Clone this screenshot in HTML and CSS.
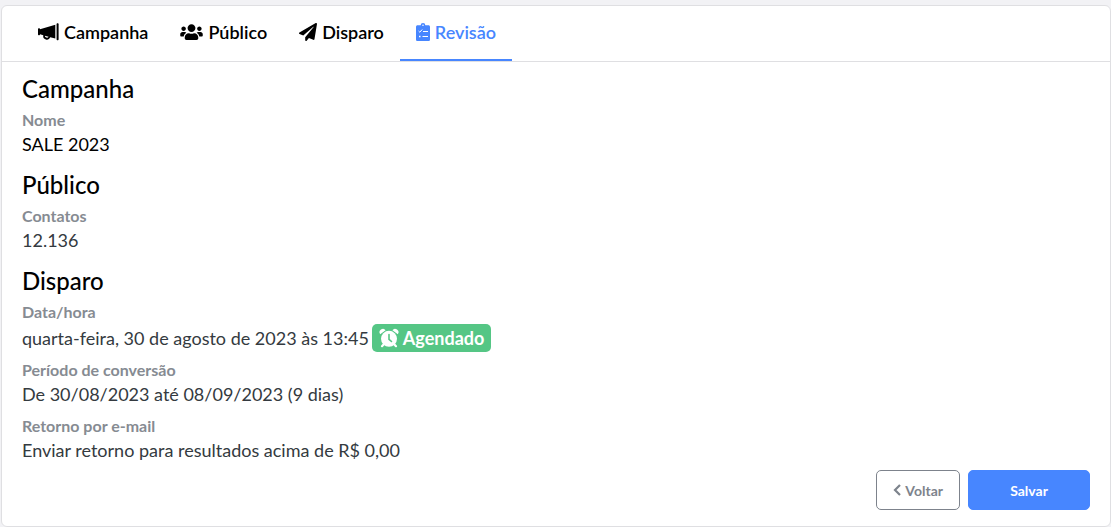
FILE: index.html
```html
<!DOCTYPE html>
<html lang="pt-br">
<head>
    <meta charset="UTF-8">
    <meta name="viewport" content="width=device-width, initial-scale=1.0">
    <title>Campanha - Revisão</title>
    <link rel="stylesheet" href="styles.css">
</head>
<body>

<main class="card">
    <nav class="abas">
        <a class="aba" href="#campanha">
            <svg class="icone" width="21" height="18" viewBox="0 0 21 18" fill="currentColor" aria-hidden="true">
                <path d="M0 6.2c0-.6.4-1 1-1s1 .4 1 1L17.300 1.800v13.800L12.200 14.200a3.600 3.600 0 0 1-6.900-2L2 11.300c0 .6-.4 1-1 1s-1-.4-1-1zM6.900 12.700a2 2 0 0 0 3.700 1z"/>
                <path d="M18.600 1.200c0-.7.400-1 1-1s1 .300 1 1v15c0 .6-.4 1-1 1s-1-.4-1-1z"/>
            </svg>
            Campanha
        </a>
        <a class="aba" href="#publico">
            <svg class="icone" width="23" height="18" viewBox="0 0 640 512" fill="currentColor" aria-hidden="true">
                <path d="M96 224c35.3 0 64-28.7 64-64s-28.7-64-64-64-64 28.7-64 64 28.7 64 64 64zm448 0c35.3 0 64-28.7 64-64s-28.7-64-64-64-64 28.7-64 64 28.7 64 64 64zm32 32h-64c-17.6 0-33.5 7.1-45.1 18.6 40.3 22.1 68.9 62 75.1 109.4h66c17.7 0 32-14.3 32-32v-32c0-35.3-28.7-64-64-64zm-256 0c61.9 0 112-50.1 112-112S381.9 32 320 32 208 82.1 208 144s50.1 112 112 112zm76.800 32h-8.300c-20.800 10-43.900 16-68.500 16s-47.600-6-68.500-16h-8.300C179.600 288 128 339.600 128 403.200V432c0 26.500 21.500 48 48 48h288c26.500 0 48-21.500 48-48v-28.800c0-63.600-51.600-115.200-115.200-115.200zm-223.700-13.400C161.500 263.100 145.600 256 128 256H64c-35.300 0-64 28.700-64 64v32c0 17.700 14.300 32 32 32h65.900c6.300-47.400 34.900-87.300 75.200-109.400z"/>
            </svg>
            Público
        </a>
        <a class="aba" href="#disparo">
            <svg class="icone" width="18" height="18" viewBox="0 0 512 512" fill="currentColor" aria-hidden="true">
                <path d="M476 3.2L12.5 270.6c-18.1 10.4-15.8 35.6 2.2 43.2L121 358.4l287.3-253.2c5.5-4.9 13.3 2.6 8.6 8.3L176 407v80.5c0 23.6 28.5 32.9 42.5 15.800L282 426l124.600 52.200c14.200 6 30.400-2.900 33-18.200l72-432C515 7.800 493.300-6.800 476 3.200z"/>
            </svg>
            Disparo
        </a>
        <a class="aba ativa" href="#revisao" aria-current="step">
            <svg class="icone" width="14" height="18" viewBox="0 0 14 18" aria-hidden="true">
                <path fill="currentColor" fill-rule="evenodd" d="M1.600 2.300H4.700a2.300 2.300 0 0 1 4.600 0h3.100c.9 0 1.600.7 1.600 1.600v12.500c0 .9-.7 1.600-1.600 1.600H1.600C.7 18 0 17.300 0 16.400V3.900C0 3 .7 2.300 1.600 2.300zM7 1.500a.8.8 0 1 0 0 1.600.8.8 0 0 0 0-1.600z"/>
                <path fill="none" stroke="#fff" d="M2.600 8l1.200 1.200 2.400-2.700M7 8.500h5M6.500 13.500H12"/>
                <path fill="#fff" d="M3 12.800h1.500v1.400H3z"/>
            </svg>
            Revisão
        </a>
    </nav>

    <div class="conteudo">
        <section>
            <h2 class="titulo">Campanha</h2>
            <dl class="dados">
                <dt>Nome</dt>
                <dd class="destaque">SALE 2023</dd>
            </dl>
        </section>

        <section>
            <h2 class="titulo">Público</h2>
            <dl class="dados">
                <dt>Contatos</dt>
                <dd>12.136</dd>
            </dl>
        </section>

        <section>
            <h2 class="titulo">Disparo</h2>
            <dl class="dados">
                <dt>Data/hora</dt>
                <dd class="agenda">
                    quarta-feira, 30 de agosto de 2023 às 13:45
                    <span class="etiqueta">
                        <svg class="icone" width="20" height="20" viewBox="0 0 20 20" aria-hidden="true">
                            <path fill="currentColor" d="M1.200 6.200A3.300 3.300 0 1 1 6.600 2.300zM18.800 6.200a3.300 3.300 0 1 0-5.400-3.900z"/>
                            <circle fill="currentColor" cx="10" cy="10.800" r="8"/>
                            <path stroke="currentColor" stroke-width="2.200" stroke-linecap="round" d="M4.800 16.200L3 18.200M15.200 16.200l1.800 2"/>
                            <path fill="none" stroke="#55c685" stroke-width="1.600" stroke-linecap="round" d="M10 6.500v4.800l2.500 2.200"/>
                        </svg>
                        Agendado
                    </span>
                </dd>
                <dt>Período de conversão</dt>
                <dd>De 30/08/2023 até 08/09/2023 (9 dias)</dd>
                <dt>Retorno por e-mail</dt>
                <dd>Enviar retorno para resultados acima de R$ 0,00</dd>
            </dl>
        </section>

        <div class="acoes">
            <button type="button" class="botao voltar">
                <svg width="8" height="12" viewBox="0 0 8 12" fill="none" stroke="currentColor" stroke-width="2.200" aria-hidden="true">
                    <path d="M7 1L2 6l5 5"/>
                </svg>
                Voltar
            </button>
            <button type="button" class="botao salvar">Salvar</button>
        </div>
    </div>
</main>

</body>
</html>
```
FILE: styles.css
```css
body{
    margin: 0;
    padding: 5px 0 0 1px;
    background-color: #f2f2f5;
    font-family: Lato, "Liberation Sans", sans-serif;
    font-size: 18px;
    line-height: 24px;
    color: #343a40;
}

.card{
    background-color: #fff;
    border: 1px solid #dfdfe2;
    border-radius: 6px;
}

/* abas */
.abas{
    display: flex;
    padding: 0 20px;
    border-bottom: 1px solid #dfdfe2;
}

.aba{
    display: flex;
    align-items: center;
    gap: 5px;
    padding: 14px 16px 15px;
    border-bottom: 2px solid transparent;
    color: #000;
    font-weight: 600;
    text-decoration: none;
}

.aba.ativa{
    color: #4786ff;
    border-bottom-color: #4786ff;
}

.icone{
    flex: none;
}

/* conteudo */
.conteudo{
    padding: 13px 20px 16px;
}

.titulo{
    margin: 0 0 5px;
    font-size: 24px;
    line-height: 28px;
    font-weight: 500;
    color: #000;
}

.dados{
    margin: 0 0 15px;
}

.dados dt{
    font-size: 16px;
    font-weight: 700;
    color: #868b92;
}

.dados dd{
    margin: 0 0 8px;
}

.dados dd:last-child{
    margin-bottom: 0;
}

.dados .destaque{
    color: #000;
}

.dados .agenda{
    display: flex;
    align-items: center;
    gap: 3px;
    margin-bottom: 6px;
}

.etiqueta{
    display: flex;
    align-items: center;
    gap: 4px;
    padding: 2px 7px;
    border-radius: 5px;
    background-color: #55c685;
    color: #fff;
    font-weight: 700;
}

/* botoes */
.acoes{
    display: flex;
    justify-content: flex-end;
    gap: 8px;
    margin-top: -7px;
}

.botao{
    display: flex;
    align-items: center;
    justify-content: center;
    gap: 4px;
    height: 40px;
    padding: 0 16px;
    border: 1px solid #7d838c;
    border-radius: 5px;
    background-color: #fff;
    color: #7d838c;
    font-family: inherit;
    font-size: 14px;
    font-weight: 700;
    cursor: pointer;
}

.salvar{
    min-width: 122px;
    border-color: #4786ff;
    background-color: #4786ff;
    color: #fff;
}
```
